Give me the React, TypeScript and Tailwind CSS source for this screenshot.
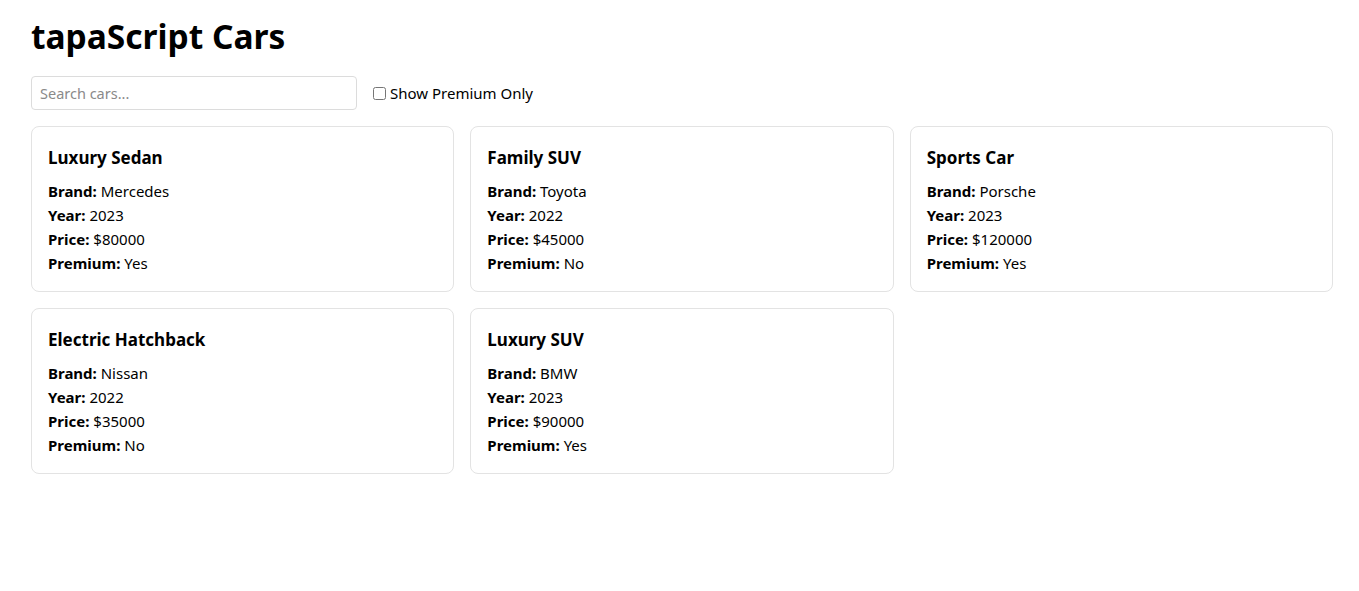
import { useState } from 'react'

interface Car {
  id: number
  name: string
  brand: string
  year: number
  price: number
  premium: boolean
}

const cars: Car[] = [
  { id: 1, name: 'Luxury Sedan', brand: 'Mercedes', year: 2023, price: 80000, premium: true },
  { id: 2, name: 'Family SUV', brand: 'Toyota', year: 2022, price: 45000, premium: false },
  { id: 3, name: 'Sports Car', brand: 'Porsche', year: 2023, price: 120000, premium: true },
  { id: 4, name: 'Electric Hatchback', brand: 'Nissan', year: 2022, price: 35000, premium: false },
  { id: 5, name: 'Luxury SUV', brand: 'BMW', year: 2023, price: 90000, premium: true },
]

function CarCard({ car }: { car: Car }) {
  return (
    <div className="rounded-lg border border-[#e3e3e3] px-4 pt-[19px] pb-[16px]">
      <h3 className="mb-[9px] text-[17px] font-bold leading-[24px]">{car.name}</h3>
      <p className="leading-6"><strong>Brand:</strong> {car.brand}</p>
      <p className="leading-6"><strong>Year:</strong> {car.year}</p>
      <p className="leading-6"><strong>Price:</strong> ${car.price}</p>
      <p className="leading-6"><strong>Premium:</strong> {car.premium ? 'Yes' : 'No'}</p>
    </div>
  )
}

export default function App() {
  const [query, setQuery] = useState('')
  const [premiumOnly, setPremiumOnly] = useState(false)

  const visible = cars.filter(
    (c) =>
      c.name.toLowerCase().includes(query.toLowerCase()) &&
      (!premiumOnly || c.premium)
  )

  return (
    <div className="min-h-screen bg-white pl-[31px] pr-[26px] pt-[12px] text-[15px] text-black font-['Noto_Sans',sans-serif]">
      <h1 className="text-[33.5px] font-bold leading-[48px]">tapaScript Cars</h1>
      <div className="mt-4 flex items-center gap-4">
        <input
          className="h-[34px] w-[326px] rounded border border-[#dcdcdc] px-2 text-[14.5px] placeholder:text-[#8a8a8a] outline-none"
          placeholder="Search cars..."
          value={query}
          onChange={(e) => setQuery(e.target.value)}
        />
        <label className="flex items-center gap-1">
          <input
            type="checkbox"
            className="h-[13px] w-[13px]"
            checked={premiumOnly}
            onChange={(e) => setPremiumOnly(e.target.checked)}
          />
          Show Premium Only
        </label>
      </div>
      <div className="mt-4 grid grid-cols-3 gap-4">
        {visible.map((car) => (
          <CarCard key={car.id} car={car} />
        ))}
      </div>
    </div>
  )
}
